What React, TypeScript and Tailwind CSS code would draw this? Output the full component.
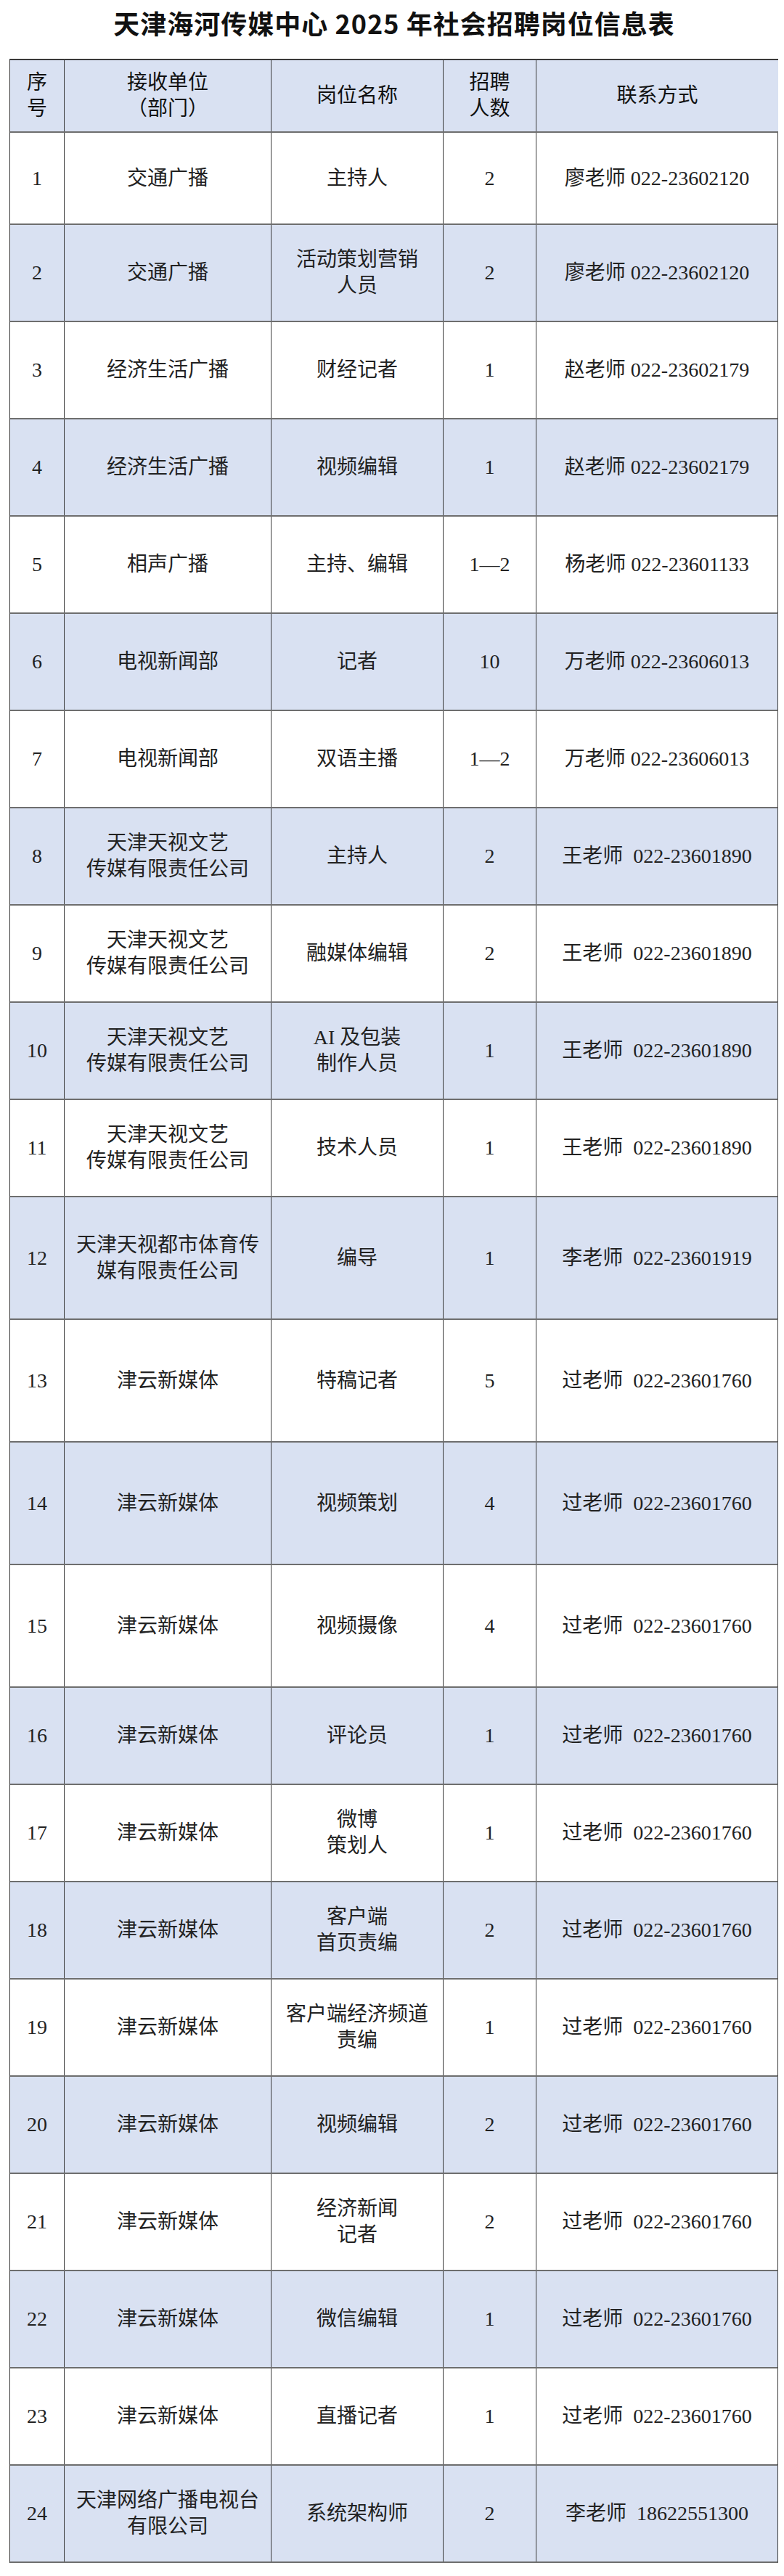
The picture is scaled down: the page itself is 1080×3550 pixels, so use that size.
import React from 'react';

type Row = {
  no: string;
  unit: string[];
  post: string[];
  count: string;
  contact: string;
  h: string;
  blue: boolean;
};

const jy = '过老师  022-23601760';
const ws = '王老师  022-23601890';
const tsw = ['天津天视文艺', '传媒有限责任公司'];

const data: [string, string[], string[], string, string][] = [
  ['1', ['交通广播'], ['主持人'], '2', '廖老师 022-23602120'],
  ['2', ['交通广播'], ['活动策划营销', '人员'], '2', '廖老师 022-23602120'],
  ['3', ['经济生活广播'], ['财经记者'], '1', '赵老师 022-23602179'],
  ['4', ['经济生活广播'], ['视频编辑'], '1', '赵老师 022-23602179'],
  ['5', ['相声广播'], ['主持、编辑'], '1—2', '杨老师 022-23601133'],
  ['6', ['电视新闻部'], ['记者'], '10', '万老师 022-23606013'],
  ['7', ['电视新闻部'], ['双语主播'], '1—2', '万老师 022-23606013'],
  ['8', tsw, ['主持人'], '2', ws],
  ['9', tsw, ['融媒体编辑'], '2', ws],
  ['10', tsw, ['AI 及包装', '制作人员'], '1', ws],
  ['11', tsw, ['技术人员'], '1', ws],
  ['12', ['天津天视都市体育传', '媒有限责任公司'], ['编导'], '1', '李老师  022-23601919'],
  ['13', ['津云新媒体'], ['特稿记者'], '5', jy],
  ['14', ['津云新媒体'], ['视频策划'], '4', jy],
  ['15', ['津云新媒体'], ['视频摄像'], '4', jy],
  ['16', ['津云新媒体'], ['评论员'], '1', jy],
  ['17', ['津云新媒体'], ['微博', '策划人'], '1', jy],
  ['18', ['津云新媒体'], ['客户端', '首页责编'], '2', jy],
  ['19', ['津云新媒体'], ['客户端经济频道', '责编'], '1', jy],
  ['20', ['津云新媒体'], ['视频编辑'], '2', jy],
  ['21', ['津云新媒体'], ['经济新闻', '记者'], '2', jy],
  ['22', ['津云新媒体'], ['微信编辑'], '1', jy],
  ['23', ['津云新媒体'], ['直播记者'], '1', jy],
  ['24', ['天津网络广播电视台', '有限公司'], ['系统架构师'], '2', '李老师  18622551300'],
];

const rows: Row[] = data.map(([no, unit, post, count, contact], i) => {
  const n = i + 1;
  let h = 'h-[134px]';
  if (n === 1) h = 'h-[127px]';
  else if (n >= 12 && n <= 15) h = 'h-[169px]';
  return { no, unit, post, count, contact, h, blue: n % 2 === 0 };
});

const Cell: React.FC<{ w: string; lines: string[]; last?: boolean }> = ({ w, lines, last }) => (
  <div
    className={`${w} shrink-0 flex flex-col items-center justify-center text-center ${
      last ? '' : 'border-r border-[#3a3a3a]'
    }`}
  >
    {lines.map((l, i) => (
      <span key={i} className="whitespace-pre leading-[36px]">
        {l}
      </span>
    ))}
  </div>
);

const App: React.FC = () => {
  return (
    <div
      className="w-[1080px] h-[3550px] bg-white text-[#222] text-[28px]"
      style={{ fontFamily: '"Liberation Serif", "Noto Sans CJK SC", serif' }}
    >
      <div
        className="h-[62px] flex items-center justify-center pl-[6px] text-[36px] font-bold text-[#111] tracking-[1px]"
        style={{ fontFamily: '"Noto Sans CJK SC", sans-serif' }}
      >
        天津海河传媒中心 2025 年社会招聘岗位信息表
      </div>

      <div className="mt-[19px] ml-[13px] w-[1059px] border-l border-t-2 border-[#3a3a3a]">
        <div className="flex h-[100px] bg-[#d9e1f2] border-b-2 border-[#6e6e6e] text-[#111]">
          <Cell w="w-[75px]" lines={['序', '号']} />
          <Cell w="w-[285px]" lines={['接收单位', '（部门）']} />
          <Cell w="w-[237px]" lines={['岗位名称']} />
          <Cell w="w-[128px]" lines={['招聘', '人数']} />
          <Cell w="w-[333px]" lines={['联系方式']} last />
        </div>

        {rows.map((r) => (
          <div
            key={r.no}
            className={`flex ${r.h} border-b-2 border-[#6e6e6e] border-r border-r-[#3a3a3a] ${
              r.blue ? 'bg-[#d9e1f2]' : 'bg-white'
            }`}
          >
            <Cell w="w-[75px]" lines={[r.no]} />
            <Cell w="w-[285px]" lines={r.unit} />
            <Cell w="w-[237px]" lines={r.post} />
            <Cell w="w-[128px]" lines={[r.count]} />
            <Cell w="w-[332px]" lines={[r.contact]} last />
          </div>
        ))}
      </div>
    </div>
  );
};

export default App;
